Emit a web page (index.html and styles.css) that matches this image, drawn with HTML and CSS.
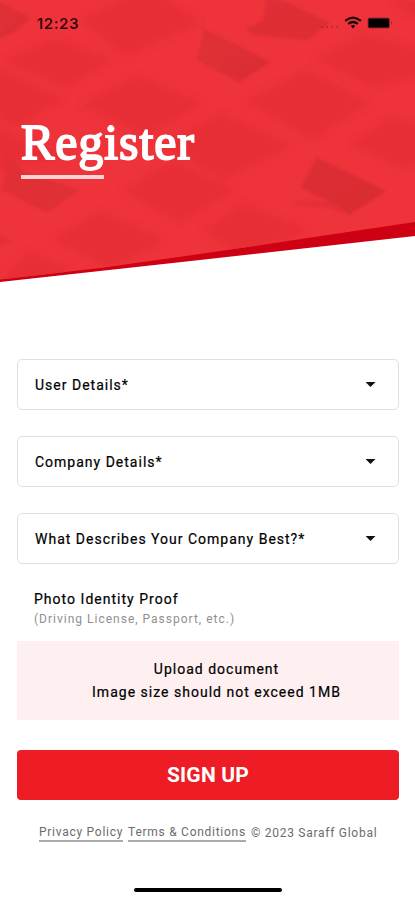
FILE: index.html
```html
<!DOCTYPE html>
<html lang="en">
<head>
<meta charset="utf-8">
<meta name="viewport" content="width=device-width, initial-scale=1">
<title>Register</title>
<link rel="stylesheet" href="styles.css">
</head>
<body>
<main class="screen">
  <header class="hero">
    <svg class="hero-art" viewBox="0 0 415 290" aria-hidden="true">
      <defs>
        <clipPath id="hero-shape"><path d="M0 0H415V222L200 254L100 268L0 279.500Z"/></clipPath>
        <filter id="soft" x="-10%" y="-10%" width="120%" height="120%"><feGaussianBlur stdDeviation="3"/></filter>
        <filter id="crisp" x="-10%" y="-10%" width="120%" height="120%"><feGaussianBlur stdDeviation="1.3"/></filter>
        <linearGradient id="shade" x1="0" y1="0" x2="1" y2="1"><stop offset="0" stop-color="#dc3035"/><stop offset="1" stop-color="#d62c31"/></linearGradient>
      </defs>
      <path fill="#cd0014" d="M0 278L100 266L200 252L415 221V236L200 260L0 282Z"/>
      <g clip-path="url(#hero-shape)">
        <path fill="#ee333b" d="M0 0H415V290H0Z"/>
        <g fill="#e82d34" filter="url(#soft)">
          <path d="M2 61L53 38L114 60L66 88Z"/>
          <path d="M80 20L148 -14L202 23L126 57Z"/>
          <path d="M80 105L137 75L204 103L147 136Z"/>
          <path d="M245 101L306 69L370 103L312 140Z"/>
          <path d="M160 145L222 113L294 145L225 180Z"/>
          <path d="M314 59L365 34L425 50V75L371 88Z"/>
          <path d="M-5 66L63 98L18 128L-5 118Z"/>
          <path d="M351 144L392 116L425 127V162L400 169Z"/>
          <path d="M122 190L174 160L237 190L179 223Z"/>
          <path d="M52 240L101 210L166 240L111 270Z"/>
          <path d="M202 231L243 203L309 230L245 258Z"/>
          <path d="M-5 287L29 251L72 269L40 290Z"/>
          <path d="M-5 125L70 160L20 163L-5 175Z"/>
          <path d="M390 0H425V26Z"/>
        </g>
        <g fill="url(#shade)" filter="url(#crisp)">
          <path opacity=".8" d="M-4 0L30 18L15 31L-4 40Z"/>
          <path opacity=".8" d="M205 29L270 62L239 82L197 60L201 46Z"/>
          <path opacity=".75" d="M267 -3L288 3L330 23L307 40L253 35L246 29L263 20Z"/>
          <path opacity=".9" d="M316 157L386 191L349 215L336 205L301 188Z"/>
          <path opacity=".5" d="M292 201L330 202L345 213L330 208L294 205Z"/>
          <path opacity=".7" d="M8 159L28 174L79 190L47 212L2 190Z"/>
          <path opacity=".5" d="M-2 235L11 241L-2 247Z"/>
        </g>
      </g>
    </svg>
    <div class="status">
      <span class="time">12:23</span>
      <svg class="indicators" viewBox="0 0 76 16" aria-hidden="true">
        <g fill="#b8282f"><circle cx="3" cy="12" r="1.100"/><circle cx="8" cy="12" r="1.100"/><circle cx="13" cy="12" r="1"/><circle cx="18" cy="12" r="1"/></g>
        <g fill="none" stroke="#1d0608" stroke-width="2.200"><path d="M26.200 5.900Q34 -.6 41.800 5.900M29.200 8.900Q34 5.100 38.800 8.900"/></g>
        <path fill="#1d0608" d="M31.700 10.800Q34 9.300 36.300 10.800L34 13.600Z"/>
        <rect x="49" y="3" width="21.500" height="10" rx="1.500" fill="#000" stroke="#a5242b" stroke-width="1"/>
        <path fill="#a5242b" d="M72 6Q74.500 8 72 10Z"/>
      </svg>
    </div>
    <h1 class="title">Register</h1>
    <div class="title-rule"></div>
  </header>

  <form class="form">
    <button type="button" class="field"><span>User Details*</span><i class="caret"></i></button>
    <button type="button" class="field"><span>Company Details*</span><i class="caret"></i></button>
    <button type="button" class="field"><span>What Describes Your Company Best?*</span><i class="caret"></i></button>
    <div class="proof">
      <span class="proof-name">Photo Identity Proof</span>
      <span class="proof-hint">(Driving License, Passport, etc.)</span>
    </div>
    <div class="upload"><span>Upload document</span><span>Image size should not exceed 1MB</span></div>
    <button type="button" class="submit">SIGN UP</button>
  </form>

  <footer class="footer">
    <a class="link">Privacy Policy</a><a class="link">Terms &amp; Conditions</a><span class="copy">© 2023 Saraff Global</span>
  </footer>
  <div class="home-bar"></div>
</main>
</body>
</html>
```
FILE: styles.css
```css
* { box-sizing: border-box; }
body { margin: 0; background: #fff; font-family: Roboto, sans-serif; }
.screen { width: 415px; height: 900px; overflow: hidden; display: flex; flex-direction: column; background: #fff; }
.hero { position: relative; height: 290px; flex: none; }
.hero-art { position: absolute; inset: 0; width: 415px; height: 290px; }
.status { position: relative; display: flex; justify-content: space-between; align-items: center; height: 46px; padding: 0 20px 0 37px; }
.time { padding-top: 2px; font: 600 15px/18px Inter, sans-serif; letter-spacing: .6px; color: #300a0d; }
.indicators { width: 76px; height: 16px; }
.title { position: relative; width: max-content; margin: 66px 0 0 21px; font: 400 50px/60px "Liberation Serif", serif; letter-spacing: .9px; color: #fff; -webkit-text-stroke: 1.800px #fff; transform: scaleY(1.02); transform-origin: 0 46px; }
.title-rule { position: relative; width: 83px; height: 4px; margin: 3px 0 0 20.500px; background: #ffd0d4; }
.form { display: flex; flex-direction: column; margin: 69px 16px 0; }
.field { display: flex; align-items: center; justify-content: space-between; height: 51px; margin: 0 0 26px .5px; padding: 0 22.500px 0 17.500px; border: 1.500px solid #e0e0e0; border-radius: 5px; background: #fff; font: 400 14px/20px Roboto, sans-serif; letter-spacing: 1px; color: #000; -webkit-text-stroke: .2px #000; }
.caret { width: 10px; height: 5px; background: #111; clip-path: polygon(0 0, 100% 0, 50% 100%); }
.proof { display: flex; flex-direction: column; margin: -1px 0 12px 18px; }
.proof-name { font-size: 14px; line-height: 20px; letter-spacing: 1.02px; color: #000; -webkit-text-stroke: .2px #000; }
.proof-hint { font-size: 12px; line-height: 20px; letter-spacing: 1px; color: #8f8f8f; }
.upload { display: flex; flex-direction: column; align-items: center; justify-content: center; height: 79px; margin: 0 0 0 1px; padding-left: 17px; background: #fef0f1; font-size: 14px; line-height: 23px; letter-spacing: 1.01px; color: #000; -webkit-text-stroke: .2px #000; }
.submit { height: 50px; margin: 30px 0 0 1px; padding: 0; border: 0; border-radius: 4px; background: #ee1c25; color: #fff; font: 700 21px/50px Roboto, sans-serif; letter-spacing: .2px; }
.footer { display: flex; align-items: flex-start; margin: 25px 0 0 39px; font-size: 12px; line-height: 15px; color: #6c6c6c; letter-spacing: .73px; white-space: nowrap; }
.link { border-bottom: 2px solid #aaa; margin-right: 5px; }
.copy { padding-top: 1px; }
.home-bar { width: 148px; height: 4px; margin: 46px 0 0 134px; border-radius: 2px; background: #000; }
```
